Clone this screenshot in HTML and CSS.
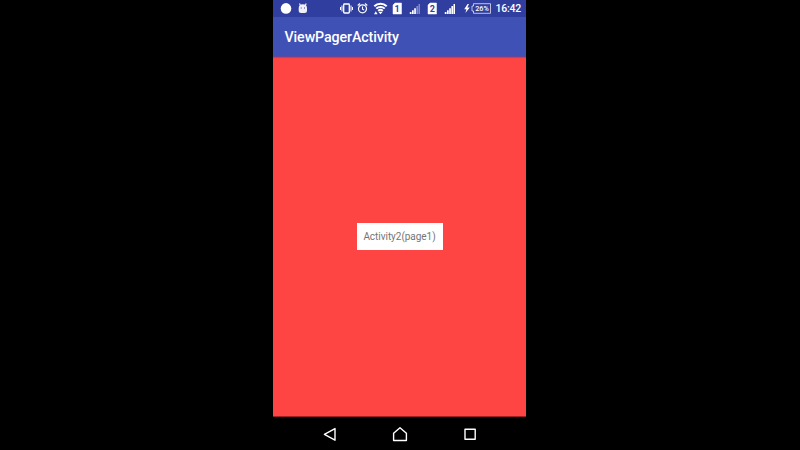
FILE: index.html
```html
<!DOCTYPE html>
<html lang="en">
<head>
<meta charset="utf-8">
<title>ViewPagerActivity</title>
<link rel="stylesheet" href="styles.css">
</head>
<body>
<main class="phone">
  <header class="status">
    <svg class="status-icons" width="222" height="17" viewBox="273 0 222 17" fill="#fff">
      <circle cx="286" cy="8.400" r="5.300"/>
      <g opacity=".93">
        <path d="M298.700 8.200h8.300v2.300a2.500 2.500 0 0 1-2.500 2.500h-3.300a2.500 2.500 0 0 1-2.500-2.500zM298.700 8.300a4.150 4 0 0 1 8.300 0z"/>
        <path d="M300.300 5.300l-.8-1.700M305.400 5.300l.8-1.700" stroke="#fff" stroke-width="1.200"/>
        <path d="M300.700 7.400h1v1h-1zM304 7.400h1v1h-1z" fill="#303f9f"/>
      </g>
      <g fill="none" stroke="#fff">
        <rect x="343.700" y="4" width="5.600" height="9" rx=".7" stroke-width="1.300"/>
        <path d="M342 5.500v6M340.500 7v3M351 5.500v6M352.500 7v3" stroke-width="1"/>
        <circle cx="362.500" cy="8.800" r="4" stroke-width="1.200"/>
        <path d="M362.500 6.500v2.600l1.700 1M357.700 5.500l2.300-2M367.300 5.500l-2.300-2" stroke-width="1.100"/>
        <path d="M374.300 6.300a8.700 8.700 0 0 1 12.400 0M376.300 8.600a6 6 0 0 1 8.400 0M378.200 10.900a3.300 3.300 0 0 1 4.600 0" stroke-width="2"/>
      </g>
      <path d="M378.300 11.700h4.400l-2.200 2.600zM374 14.300l1.800-3 1.800 3z"/>
      <path d="M395 3h6.500v11h-8.500V5zM430 3h6.500v11H428V5z" stroke="#fff" stroke-width=".5" stroke-linejoin="round"/>
      <path d="M409.800 12h1.700v2h-1.700zM412 10.200h1.700V14H412zM414.200 8.200h1.700V14h-1.700z"/>
      <path d="M416.400 6h1.700v8h-1.700zM418.500 4h1.500v10h-1.500z" opacity=".4"/>
      <path d="M444.800 12h1.700v2h-1.700zM447 10.200h1.700V14H447zM449.200 8.200h1.700V14h-1.700zM451.400 6h1.700v8h-1.700zM453.500 4h1.500v10h-1.500z"/>
      <path d="M467.600 4l-3.400 5.200h2.200l-1 3.800 4.400-5.400h-2.500L469 4z"/>
      <path d="M473.500 3.700h17v9.600h-17v-2.300H472V6h1.500z" fill="none" stroke="#fff" stroke-width=".9" opacity=".75"/>
      <g font-family="Roboto" font-weight="700" text-anchor="middle">
        <text x="397.200" y="11.800" font-size="9" fill="#303f9f">1</text>
        <text x="432.300" y="11.800" font-size="9" fill="#303f9f">2</text>
        <text x="482" y="11.200" font-size="7.200" font-weight="500">26%</text>
      </g>
    </svg>
    <time class="clock">16:42</time>
  </header>
  <h1 class="toolbar">ViewPagerActivity</h1>
  <section class="page"><div class="label">Activity2(page1)</div></section>
  <nav class="nav">
    <svg width="14" height="14" viewBox="0 0 14 14"><path d="M1.400 7.400L12 1.600v11.600z"/></svg>
    <svg width="16" height="16" viewBox="0 0 16 16"><path d="M1.600 7.300L8 1.700l6.400 5.600v7.200H1.600z"/></svg>
    <svg width="14" height="14" viewBox="0 0 14 14"><path d="M2 2.300h10.200v10H2z"/></svg>
  </nav>
</main>
</body>
</html>
```
FILE: styles.css
```css
body {
  margin: 0;
  background: #000;
  font-family: Roboto, sans-serif;
}
.phone {
  width: 253px;
  height: 450px;
  margin-left: 273px;
  display: flex;
  flex-direction: column;
  color: #fff;
}
.status {
  height: 17px;
  display: flex;
  background: #303f9f;
}
.status-icons {
  display: block;
  flex: none;
}
.clock {
  padding-left: 0.5px;
  font-size: 10.5px;
  line-height: 18px;
  font-weight: 500;
  letter-spacing: -0.25px;
  white-space: nowrap;
}
.toolbar {
  box-sizing: border-box;
  height: 40px;
  margin: 0;
  padding-left: 11.5px;
  background: #3f51b5;
  border-bottom: 1px solid #64479b;
  font-size: 14.2px;
  line-height: 41px;
  font-weight: 500;
  letter-spacing: -0.08px;
}
.page {
  box-sizing: border-box;
  height: 360px;
  display: flex;
  align-items: center;
  justify-content: center;
  background: #ff4444;
  border-bottom: 1px solid #a02020;
  box-shadow: inset 0 2px 1px -1px #d83e48;
}
.label {
  width: 86px;
  height: 27px;
  background: #fff;
  color: #757575;
  font-size: 10px;
  line-height: 28px;
  letter-spacing: -0.04px;
  text-align: center;
  white-space: nowrap;
}
.nav {
  flex: 1;
  display: flex;
  align-items: center;
  justify-content: center;
  gap: 55px;
  padding-top: 1px;
}
.nav svg {
  fill: none;
  stroke: #fff;
  stroke-width: 1.4;
  stroke-linejoin: round;
}
```
